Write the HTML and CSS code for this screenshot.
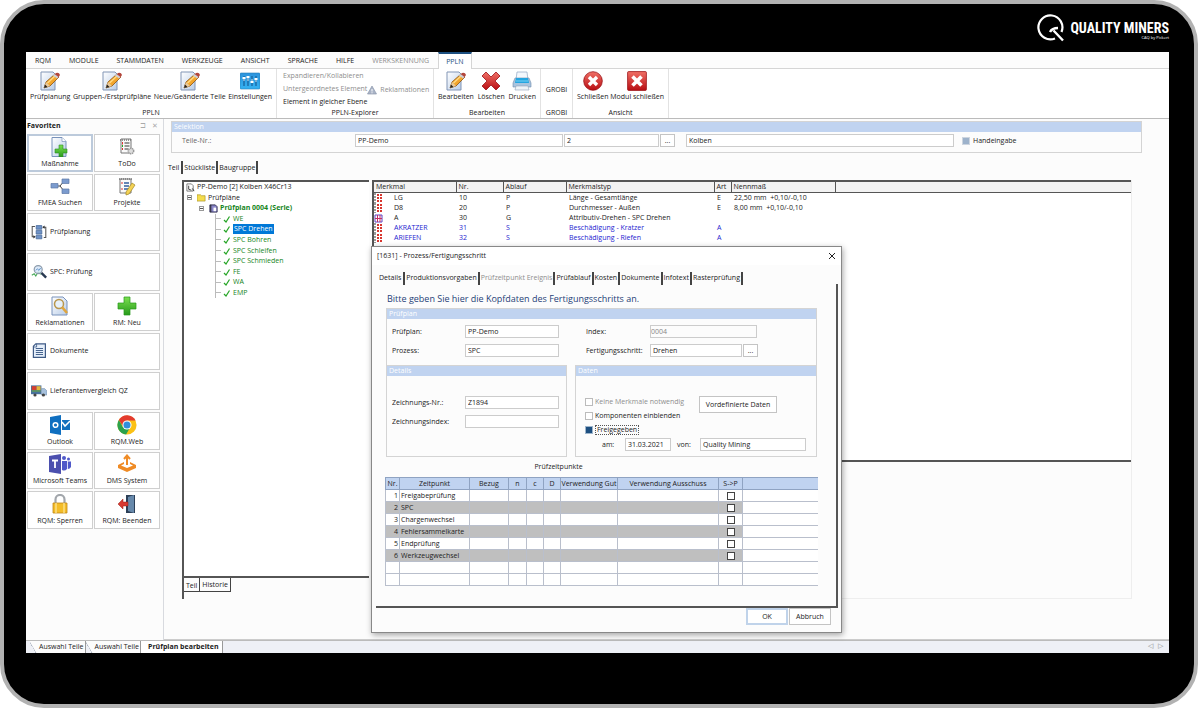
FILE: index.html
```
<!DOCTYPE html>
<html lang="de">
<head>
    <meta charset="UTF-8">
    <meta name="viewport" content="width=device-width, initial-scale=1.0">
    <title>Prüfplan bearbeiten</title>
    <link rel="stylesheet" href="styles.css">
</head>
<body>
    <!-- Icons -->
    <svg class="sprite" aria-hidden="true">
        <defs>
            <linearGradient id="gPage" x1="0" y1="0" x2="1" y2="1"><stop offset="0" stop-color="#fff"/><stop offset="1" stop-color="#b9cde8"/></linearGradient>
            <linearGradient id="gRed" x1="0" y1="0" x2="0" y2="1"><stop offset="0" stop-color="#f07066"/><stop offset="1" stop-color="#b80d12"/></linearGradient>
            <linearGradient id="gBlue" x1="0" y1="0" x2="0" y2="1"><stop offset="0" stop-color="#2c93dc"/><stop offset="1" stop-color="#35b2f2"/></linearGradient>
            <linearGradient id="gGreen" x1="0" y1="0" x2="0" y2="1"><stop offset="0" stop-color="#7be04f"/><stop offset="1" stop-color="#279a1b"/></linearGradient>
        </defs>
        <symbol id="edit" viewBox="0 0 20 20">
            <path d="M1 1h12l2 2v16H1z" fill="url(#gPage)" stroke="#8195b5"/>
            <path d="M4 17l2-6 9-8 4 3-9 9z" fill="#f2a52c" stroke="#8a5312" stroke-width=".8"/>
            <path d="M7.500 12l8-7.500" stroke="#ffd982" stroke-width="1.500"/>
            <path d="M14 4l2-2q3-1 4 2l-2 3z" fill="#b3453b"/>
            <path d="M13 4.500l4 3 1.500-1.500-4-3z" fill="#cfd0d4"/>
            <path d="M4 17l2-6 4 4z" fill="#e8c99c"/><path d="M4 17l1-3.500L7.500 16z" fill="#222"/>
        </symbol>
        <symbol id="settings" viewBox="0 0 20 20">
            <rect x="0" y="2" width="20" height="16" rx="1" fill="url(#gBlue)" stroke="#237db9" stroke-width=".6"/>
            <path d="M4 5v10M8 5v10M12 5v10M16 5v10" stroke="#185f98" stroke-width="1.200"/>
            <path d="M2.500 7h3M6.500 6h3M10.500 11h3M14.500 8h3" stroke="#fff" stroke-width="1.800"/>
            <path d="M4 7v3M8 6v4M12 8v3M16 8v3" stroke="#fff" stroke-width=".8"/>
        </symbol>
        <symbol id="warn" viewBox="0 0 10 10"><path d="M5 1l4.500 8h-9z" fill="#a9b3c6" stroke="#8e99ae" stroke-width=".7"/><path d="M5 4v2.500M5 7.300v1" stroke="#fff"/></symbol>
        <symbol id="delete" viewBox="0 0 20 20"><path d="M1 5l4-4 5 5 5-5 4 4-5 5 5 5-4 4-5-5-5 5-4-4 5-5z" fill="url(#gRed)" stroke="#9c1219" stroke-width=".8"/></symbol>
        <symbol id="print" viewBox="0 0 20 20">
            <path d="M5 1h10l1 8H4z" fill="#f4f8fd" stroke="#8fa6c3" stroke-width=".7"/>
            <path d="M3 7h14l2 5v4H1v-4z" fill="#a9c4de" stroke="#718bab" stroke-width=".6"/>
            <path d="M4 7h12l1 5H3z" fill="#24a5e0"/><path d="M4 10h12" stroke="#79d2f5"/>
            <path d="M4 15h12l1 4H3z" fill="#eef3f8" stroke="#90a3b9" stroke-width=".6"/>
        </symbol>
        <symbol id="close-round" viewBox="0 0 20 20"><circle cx="10" cy="10" r="9.300" fill="url(#gRed)" stroke="#9b1318" stroke-width=".8"/><path d="M6 6l8 8M14 6l-8 8" stroke="#fff" stroke-width="3.400"/></symbol>
        <symbol id="close-square" viewBox="0 0 20 20"><rect x=".6" y=".6" width="18.800" height="18.800" rx="1" fill="url(#gRed)" stroke="#9b1318" stroke-width=".8"/><path d="M5.500 5.500l9 9M14.500 5.500l-9 9" stroke="#fff" stroke-width="3.600"/></symbol>
        <symbol id="add-page" viewBox="0 0 20 20"><path d="M2 .5h10l4 4v15H2z" fill="url(#gPage)" stroke="#7892bb"/><path d="M12 .5v4h4" fill="#fff" stroke="#7892bb" stroke-width=".7"/><path d="M9 8h4v4h4v4h-4v4H9v-4H5v-4h4z" fill="url(#gGreen)" stroke="#2b8c25" stroke-width=".6"/></symbol>
        <symbol id="todo" viewBox="0 0 20 20"><path d="M4 2h10v14H4z" fill="#fafafa" stroke="#777"/><path d="M3 3h12" stroke="#777" stroke-width="1.500" stroke-dasharray="1 1"/><path d="M7.500 6h5M7.500 9h5M7.500 12h4" stroke="#777" stroke-width="1.300"/><path d="M5.500 5v2.500M5.500 11v2" stroke="#d33"/><path d="M5.500 8v2" stroke="#2a2"/><circle cx="14" cy="14" r="2.700" fill="#ddd" stroke="#999" stroke-width="1.500" stroke-dasharray="1.300 .6"/></symbol>
        <symbol id="projects" viewBox="0 0 20 20"><path d="M3 3h11v14H3z" fill="#fafafa" stroke="#777"/><path d="M2 3h13" stroke="#777" stroke-width="1.500" stroke-dasharray="1 1"/><path d="M7 7h5M7 10h5M7 13h5" stroke="#345f9e" stroke-width="1.300"/><path d="M5 6v2M5 12v2" stroke="#d33"/><path d="M9 16l6-9 3 2-6 9-3 1z" fill="#f4d254" stroke="#a18727" stroke-width=".7"/></symbol>
        <symbol id="fmea" viewBox="0 0 20 20"><path d="M7 10h3l4-5M10 10l4 5" fill="none" stroke="#444"/><path d="M1 7.500h7v4.500H1zM12 3h7v4.500h-7zM12 13h7v4.500h-7z" fill="#7b9bce" stroke="#5d79a6" stroke-width=".7"/></symbol>
        <symbol id="plan" viewBox="0 0 20 20"><path d="M5 3H1.500v13H4M15 4h3.500v13H16" fill="none" stroke="#555" stroke-width="1.300"/><path d="M3 14l3 2-3 2zM17 2l-3 2 3 2z" fill="#333"/><path d="M6.500 2h7v4.500h-7zM6.500 8h7v4.500h-7zM6.500 14h7v4.500h-7z" fill="#6f92c7" stroke="#48699b"/></symbol>
        <symbol id="spc" viewBox="0 0 20 20"><path d="M1 14l3-2 2 3 3-5 3 3" fill="none" stroke="#45a856" stroke-width="1.300"/><circle cx="9" cy="7" r="5" fill="#d4e5f7" fill-opacity=".8" stroke="#8c9bab" stroke-width="1.500"/><path d="M6 8l2-2 2 2 2-3" fill="none" stroke="#4580be"/><path d="M13 11l6 6" stroke="#273850" stroke-width="3"/></symbol>
        <symbol id="complaint" viewBox="0 0 20 20"><path d="M2 1h11l4 4v14H2z" fill="url(#gPage)" stroke="#7892bb"/><circle cx="9" cy="8" r="4.500" fill="#e6f1fb" stroke="#b9974e" stroke-width="1.500"/><path d="M12 11l5 6" stroke="#e0a63e" stroke-width="2.600"/></symbol>
        <symbol id="plus" viewBox="0 0 20 20"><path d="M7 1h6v6h6v6h-6v6H7v-6H1V7h6z" fill="url(#gGreen)" stroke="#279a1b" stroke-width=".7"/></symbol>
        <symbol id="docs" viewBox="0 0 20 20"><path d="M6 1h12v17H3V4z" fill="#e6effa" stroke="#3f5b86" stroke-width="1.500"/><path d="M7 1v4H3" fill="none" stroke="#3f5b86"/><path d="M6 7h9M6 9.500h9M6 12h9M6 14.500h9" stroke="#48658f" stroke-width="1.300"/></symbol>
        <symbol id="truck" viewBox="0 0 20 20"><path d="M0 3h13v11H0z" fill="#49729d"/><path d="M1 4h6v5H1z" fill="#d63e2f"/><path d="M7 4h5v5H7z" fill="#e4b53c"/><path d="M1 10h11" stroke="#62a34d" stroke-width="1.600"/><path d="M13 7h4l3 3v5h-7z" fill="#a6c0dc" stroke="#6480a0" stroke-width=".6"/><circle cx="5" cy="15" r="2" fill="#444"/><circle cx="15.500" cy="15" r="2" fill="#444"/></symbol>
        <symbol id="outlook" viewBox="0 0 20 20"><path d="M0 2l11-2v20L0 18z" fill="#0f6fc0"/><circle cx="5.500" cy="10" r="2.300" fill="none" stroke="#fff" stroke-width="1.500"/><path d="M12 5h8v10h-8z" fill="#1270bd"/><path d="M12 7l3 4 5-5" fill="none" stroke="#fff" stroke-width="1.500"/></symbol>
        <symbol id="chrome" viewBox="0 0 22 22"><circle cx="11" cy="11" r="10.500" fill="#fbc116"/><path d="M2 5.500A10.500 10.500 0 0 1 20.500 6H11L7 13z" fill="#e33b2e"/><path d="M2 5.500A10.500 10.500 0 0 0 10 21.500L14.500 13.500H6.500z" fill="#2ba24c"/><circle cx="11" cy="11" r="5" fill="#fff"/><circle cx="11" cy="11" r="3.900" fill="#318fdc"/></symbol>
        <symbol id="teams" viewBox="0 0 22 20"><circle cx="15" cy="4" r="2" fill="#5059c9"/><circle cx="19.500" cy="5" r="1.500" fill="#5059c9"/><path d="M13 7h5v8a4 4 0 0 1-5 1z" fill="#5059c9"/><path d="M18.800 7.500H22V13q-1 2-3.200 2z" fill="#5059c9"/><path d="M0 2l12-2v20L0 18z" fill="#4b4fae"/><path d="M3 6.500h6M6 6.500V14" stroke="#fff" stroke-width="1.800"/></symbol>
        <symbol id="dms" viewBox="0 0 20 20"><path d="M10 11V3M7 5l3-3.500L13 5" fill="none" stroke="#ef8b25" stroke-width="2"/><path d="M7 8l-6 3v3l9 4 9-4v-3l-6-3v2l3 1.500-6 2.500-6-2.500L7 10z" fill="#ef8b25"/></symbol>
        <symbol id="lock" viewBox="0 0 20 20"><path d="M5.500 10V5.500a4.500 4.500 0 0 1 9 0V10" fill="none" stroke="#a2a6ab" stroke-width="2.200"/><path d="M3 9h14v10H3z" fill="#f4bd28" stroke="#bf8618" stroke-width=".8"/><path d="M6 9v10M14 9v10" stroke="#fbe084" stroke-width="1.500"/></symbol>
        <symbol id="exit" viewBox="0 0 20 20"><path d="M9 1h9v18H9z" fill="#2c3f57"/><path d="M11 3l6-2v18l-6-2z" fill="#6789ab"/><path d="M11 8H6V5l-5 5 5 5v-3h5z" fill="#d83931" stroke="#952019" stroke-width=".5"/></symbol>
        <symbol id="check" viewBox="0 0 8 8"><path d="M1 5L3 7l3.500-5.500" fill="none" stroke="#26a526" stroke-width="1.200"/></symbol>
        <symbol id="part" viewBox="0 0 10 10"><path d="M1 1h5l2 2v6H1z" fill="#fff" stroke="#555" stroke-width=".8"/><path d="M3 3v4l3 1M7 6l2 3" stroke="#333" fill="none"/></symbol>
        <symbol id="folder" viewBox="0 0 10 10"><path d="M0 2h4l1 1h4v6H0z" fill="#f4dc4c" stroke="#a68f25" stroke-width=".7"/></symbol>
        <symbol id="book" viewBox="0 0 10 10"><path d="M1 1h6l2 2v6H1z" fill="#8a86c8" stroke="#29284c"/><path d="M5 4h3v4H5z" fill="#fff"/><path d="M2 1v8" stroke="#222"/></symbol>
        <symbol id="variable" viewBox="0 0 9 10"><path d="M1 0v10" stroke="#333" stroke-dasharray="2 1"/><path d="M4 1v8M7 1v8" stroke="#d8362f" stroke-width="2" stroke-dasharray="2 1"/></symbol>
        <symbol id="attribute" viewBox="0 0 9 10"><path d="M1 2h7v7H1z" fill="#fff" stroke="#5e43c1"/><path d="M1 5.500h7M3.500 2v7M6 2v7" stroke="#c22f64"/></symbol>
    </svg>

    <div class="device">
        <header class="brand">
            <svg class="brand-logo" viewBox="0 0 28 28"><path d="M18 24.500A12 12 0 1 1 24.500 18" fill="none" stroke="#fff" stroke-width="2.200"/><path d="M13 18q2-4 8-4M16.500 16.500L26 26.500" fill="none" stroke="#fff" stroke-width="2.400"/></svg>
            <div class="brand-text">
                <strong>QUALITY MINERS</strong>
                <small>CAQ by Pickert</small>
            </div>
        </header>

        <div class="app">
            <nav class="menu">
                <button type="button">RQM</button>
                <button type="button">MODULE</button>
                <button type="button">STAMMDATEN</button>
                <button type="button">WERKZEUGE</button>
                <button type="button">ANSICHT</button>
                <button type="button">SPRACHE</button>
                <button type="button">HILFE</button>
                <button type="button" class="muted">WERKSKENNUNG</button>
                <button type="button" class="active">PPLN</button>
            </nav>

            <div class="ribbon">
                <section class="group group-ppln">
                    <div class="tools">
                        <button type="button"><svg><use href="#edit"/></svg>Prüfplanung</button>
                        <button type="button"><svg><use href="#edit"/></svg>Gruppen-/Erstprüfpläne</button>
                        <button type="button"><svg><use href="#edit"/></svg>Neue/Geänderte Teile</button>
                        <button type="button"><svg><use href="#settings"/></svg>Einstellungen</button>
                    </div>
                    <div class="group-name">PPLN</div>
                </section>
                <section class="group group-explorer">
                    <div class="explorer">
                        <div class="explorer-list">
                            <button type="button" class="muted">Expandieren/Kollabieren</button>
                            <button type="button" class="muted">Untergeordnetes Element</button>
                            <button type="button">Element in gleicher Ebene</button>
                        </div>
                        <button type="button" class="muted complaint"><svg><use href="#warn"/></svg>Reklamationen</button>
                    </div>
                    <div class="group-name">PPLN-Explorer</div>
                </section>
                <section class="group group-edit">
                    <div class="tools">
                        <button type="button"><svg><use href="#edit"/></svg>Bearbeiten</button>
                        <button type="button"><svg><use href="#delete"/></svg>Löschen</button>
                        <button type="button"><svg><use href="#print"/></svg>Drucken</button>
                    </div>
                    <div class="group-name">Bearbeiten</div>
                </section>
                <section class="group group-grobi">
                    <div class="tools"><button type="button">GROBI</button></div>
                    <div class="group-name">GROBI</div>
                </section>
                <section class="group group-view">
                    <div class="tools">
                        <button type="button"><svg><use href="#close-round"/></svg>Schließen</button>
                        <button type="button"><svg><use href="#close-square"/></svg>Modul schließen</button>
                    </div>
                    <div class="group-name">Ansicht</div>
                </section>
            </div>

            <div class="main">
                <aside class="sidebar">
                    <div class="sidebar-head"><strong>Favoriten</strong><span class="pin">⊐</span><span class="pin">✕</span></div>
                    <div class="favorites">
                        <button type="button" class="selected"><svg><use href="#add-page"/></svg>Maßnahme</button>
                        <button type="button"><svg><use href="#todo"/></svg>ToDo</button>
                        <button type="button"><svg><use href="#fmea"/></svg>FMEA Suchen</button>
                        <button type="button"><svg><use href="#projects"/></svg>Projekte</button>
                        <button type="button" class="wide"><svg><use href="#plan"/></svg>Prüfplanung</button>
                        <button type="button" class="wide"><svg><use href="#spc"/></svg>SPC: Prüfung</button>
                        <button type="button"><svg><use href="#complaint"/></svg>Reklamationen</button>
                        <button type="button"><svg><use href="#plus"/></svg>RM: Neu</button>
                        <button type="button" class="wide"><svg><use href="#docs"/></svg>Dokumente</button>
                        <button type="button" class="wide"><svg><use href="#truck"/></svg>Lieferantenvergleich QZ</button>
                        <button type="button"><svg><use href="#outlook"/></svg>Outlook</button>
                        <button type="button"><svg><use href="#chrome"/></svg>RQM.Web</button>
                        <button type="button"><svg><use href="#teams"/></svg>Microsoft Teams</button>
                        <button type="button"><svg><use href="#dms"/></svg>DMS System</button>
                        <button type="button"><svg><use href="#lock"/></svg>RQM: Sperren</button>
                        <button type="button"><svg><use href="#exit"/></svg>RQM: Beenden</button>
                    </div>
                </aside>

                <main class="content">
                    <section class="panel selection">
                        <h2>Selektion</h2>
                        <div class="selection-row">
                            <label for="partNo">Teile-Nr.:</label>
                            <input type="text" id="partNo" class="part-no" value="PP-Demo">
                            <input type="text" class="part-index" aria-label="Index" value="2">
                            <button type="button" class="btn more">...</button>
                            <input type="text" class="part-name" aria-label="Bezeichnung" value="Kolben">
                            <label class="manual"><input type="checkbox" class="gray-check">Handeingabe</label>
                        </div>
                    </section>

                    <div class="tabs">
                        <button type="button" class="active">Teil</button>
                        <button type="button">Stückliste</button>
                        <button type="button">Baugruppe</button>
                    </div>

                    <div class="work">
                        <div class="tree-col">
                            <ul class="tree">
                                <li><svg><use href="#part"/></svg>PP-Demo [2] Kolben X46Cr13</li>
                                <li class="level-1"><i class="toggle"></i><svg><use href="#folder"/></svg>Prüfpläne</li>
                                <li class="level-2"><i class="toggle"></i><svg><use href="#book"/></svg><strong>Prüfplan 0004 (Serie)</strong></li>
                                <li class="leaf"><svg><use href="#check"/></svg><span>WE</span></li>
                                <li class="leaf"><svg><use href="#check"/></svg><span class="current">SPC Drehen</span></li>
                                <li class="leaf"><svg><use href="#check"/></svg><span>SPC Bohren</span></li>
                                <li class="leaf"><svg><use href="#check"/></svg><span>SPC Schleifen</span></li>
                                <li class="leaf"><svg><use href="#check"/></svg><span>SPC Schmieden</span></li>
                                <li class="leaf"><svg><use href="#check"/></svg><span>FE</span></li>
                                <li class="leaf"><svg><use href="#check"/></svg><span>WA</span></li>
                                <li class="leaf"><svg><use href="#check"/></svg><span>EMP</span></li>
                            </ul>
                            <div class="tree-tabs">
                                <button type="button" class="active">Teil</button>
                                <button type="button">Historie</button>
                            </div>
                        </div>

                        <div class="list-col">
                            <div class="list">
                                <table class="features">
                                    <thead>
                                        <tr><th class="c-name">Merkmal</th><th class="c-nr">Nr.</th><th class="c-flow">Ablauf</th><th class="c-type">Merkmalstyp</th><th class="c-art">Art</th><th class="c-nominal">Nennmaß</th><th></th></tr>
                                    </thead>
                                    <tbody>
                                        <tr><td><svg><use href="#variable"/></svg>LG</td><td>10</td><td>P</td><td>Länge - Gesamtlänge</td><td>E</td><td>22,50 mm &nbsp;+0,10/-0,10</td><td></td></tr>
                                        <tr><td><svg><use href="#variable"/></svg>D8</td><td>20</td><td>P</td><td>Durchmesser - Außen</td><td>E</td><td>8,00 mm &nbsp;+0,10/-0,10</td><td></td></tr>
                                        <tr><td><svg><use href="#attribute"/></svg>A</td><td>30</td><td>G</td><td>Attributiv-Drehen - SPC Drehen</td><td></td><td></td><td></td></tr>
                                        <tr class="damage"><td><svg><use href="#variable"/></svg>AKRATZER</td><td>31</td><td>S</td><td>Beschädigung - Kratzer</td><td>A</td><td></td><td></td></tr>
                                        <tr class="damage"><td><svg><use href="#variable"/></svg>ARIEFEN</td><td>32</td><td>S</td><td>Beschädigung - Riefen</td><td>A</td><td></td><td></td></tr>
                                    </tbody>
                                </table>
                            </div>
                        </div>
                    </div>
                </main>

                <!-- Dialog -->
                <div class="dialog" role="dialog" aria-labelledby="dialogTitle">
                    <div class="dialog-head">
                        <span id="dialogTitle">[1631] - Prozess/Fertigungsschritt</span>
                        <button type="button" class="dialog-close" aria-label="Schließen"><svg viewBox="0 0 8 8"><path d="M1 1l6 6M7 1L1 7" stroke="#222" stroke-width="1"/></svg></button>
                    </div>
                    <div class="tabs">
                        <button type="button" class="active">Details</button>
                        <button type="button">Produktionsvorgaben</button>
                        <button type="button" class="muted">Prüfzeitpunkt Ereignis</button>
                        <button type="button">Prüfablauf</button>
                        <button type="button">Kosten</button>
                        <button type="button">Dokumente</button>
                        <button type="button">Infotext</button>
                        <button type="button">Rasterprüfung</button>
                    </div>
                    <div class="dialog-body">
                        <h1>Bitte geben Sie hier die Kopfdaten des Fertigungsschritts an.</h1>
                        <section class="panel plan">
                            <h2>Prüfplan</h2>
                            <div class="plan-fields">
                                <label for="planNo">Prüfplan:</label>
                                <input type="text" id="planNo" value="PP-Demo">
                                <label for="idx">Index:</label>
                                <div class="with-button"><input type="text" id="idx" class="idx" value="0004" disabled></div>
                                <label for="process">Prozess:</label>
                                <input type="text" id="process" value="SPC">
                                <label for="step">Fertigungsschritt:</label>
                                <div class="with-button"><input type="text" id="step" class="step" value="Drehen"><button type="button" class="btn more">...</button></div>
                            </div>
                        </section>
                        <div class="columns">
                            <section class="panel details">
                                <h2>Details</h2>
                                <div class="detail-fields">
                                    <label for="drawing">Zeichnungs-Nr.:</label>
                                    <input type="text" id="drawing" value="Z1894">
                                    <label for="drawingIndex">Zeichnungsindex:</label>
                                    <input type="text" id="drawingIndex">
                                </div>
                            </section>
                            <section class="panel data">
                                <h2>Daten</h2>
                                <div class="data-fields">
                                    <div class="checks">
                                        <div class="check-list">
                                            <label class="muted"><input type="checkbox" disabled>Keine Merkmale notwendig</label>
                                            <label><input type="checkbox">Komponenten einblenden</label>
                                            <label><input type="checkbox" checked><span class="focused">Freigegeben</span></label>
                                        </div>
                                        <button type="button" class="btn preset">Vordefinierte Daten</button>
                                    </div>
                                    <div class="release">
                                        <label for="date">am:</label>
                                        <input type="text" id="date" class="date" value="31.03.2021">
                                        <label for="user">von:</label>
                                        <input type="text" id="user" class="user" value="Quality Mining">
                                    </div>
                                </div>
                            </section>
                        </div>
                        <table class="times">
                            <caption>Prüfzeitpunkte</caption>
                            <thead>
                                <tr><th class="t-nr">Nr.</th><th class="t-name">Zeitpunkt</th><th class="t-ref">Bezug</th><th class="t-n">n</th><th class="t-c">c</th><th class="t-c">D</th><th class="t-good">Verwendung Gut</th><th class="t-bad">Verwendung Ausschuss</th><th class="t-sp">S-&gt;P</th><th></th></tr>
                            </thead>
                            <tbody>
                                <tr><td>1</td><td>Freigabeprüfung</td><td></td><td></td><td></td><td></td><td></td><td></td><td><input type="checkbox" aria-label="S-&gt;P 1"></td><td></td></tr>
                                <tr class="alt"><td>2</td><td>SPC</td><td></td><td></td><td></td><td></td><td></td><td></td><td><input type="checkbox" aria-label="S-&gt;P 2"></td><td></td></tr>
                                <tr><td>3</td><td>Chargenwechsel</td><td></td><td></td><td></td><td></td><td></td><td></td><td><input type="checkbox" aria-label="S-&gt;P 3"></td><td></td></tr>
                                <tr class="alt"><td>4</td><td>Fehlersammelkarte</td><td></td><td></td><td></td><td></td><td></td><td></td><td><input type="checkbox" aria-label="S-&gt;P 4"></td><td></td></tr>
                                <tr><td>5</td><td>Endprüfung</td><td></td><td></td><td></td><td></td><td></td><td></td><td><input type="checkbox" aria-label="S-&gt;P 5"></td><td></td></tr>
                                <tr class="alt"><td>6</td><td>Werkzeugwechsel</td><td></td><td></td><td></td><td></td><td></td><td></td><td><input type="checkbox" aria-label="S-&gt;P 6"></td><td></td></tr>
                                <tr><td></td><td></td><td></td><td></td><td></td><td></td><td></td><td></td><td></td><td></td></tr>
                                <tr><td></td><td></td><td></td><td></td><td></td><td></td><td></td><td></td><td></td><td></td></tr>
                            </tbody>
                        </table>
                    </div>
                    <div class="dialog-foot">
                        <button type="button" class="btn ok">OK</button>
                        <button type="button" class="btn">Abbruch</button>
                    </div>
                </div>
            </div>

            <footer class="windows">
                <button type="button">Auswahl Teile</button>
                <button type="button">Auswahl Teile</button>
                <button type="button" class="active">Prüfplan bearbeiten</button>
                <div class="scroll"><span>◁</span><span>▷</span></div>
            </footer>
        </div>
    </div>
</body>
</html>
```
FILE: styles.css
```
* {
    box-sizing: border-box;
}
body {
    margin: 0;
    padding: 0 2px 2px 0;
    height: 100vh;
    background-color: white;
    color: #222;
    font-family: "Open Sans", "Noto Sans", sans-serif;
    font-size: 7px;
    line-height: 10px;
}
button, input {
    font: inherit;
    color: inherit;
    margin: 0;
}
button {
    border: none;
    background: none;
    padding: 0;
    white-space: nowrap;
    cursor: pointer;
}
label {
    white-space: nowrap;
}
input[type="text"] {
    height: 13px;
    min-width: 0;
    padding: 0 2px;
    border: 1px solid #ccc;
    background-color: white;
}
input[type="text"]:disabled {
    padding: 0;
    background-color: #fcfcfc;
    color: #888;
}
input[type="checkbox"] {
    appearance: none;
    flex: none;
    width: 8px;
    height: 8px;
    border: 1px solid #bbb;
    background-color: white;
}
input[type="checkbox"]:checked {
    border: 1px solid #9fb6cc;
    background-color: #1d4f80;
}
.sprite {
    position: absolute;
    width: 0;
    height: 0;
}
.muted {
    color: #8e8e8e;
}

/* Frame */
.device {
    display: flex;
    flex-direction: column;
    height: 100%;
    min-height: 700px;
    padding: 0 25px 51px 22px;
    border: 4px solid #b2b2b2;
    border-radius: 44px;
    background-color: black;
}
.brand {
    display: flex;
    justify-content: flex-end;
    align-items: center;
    height: 48px;
    gap: 5px;
    color: white;
}
.brand-logo {
    width: 28px;
    height: 28px;
}
.brand-text {
    display: flex;
    flex-direction: column;
    align-items: flex-end;
    padding-top: 6px;
}
.brand-text strong {
    font-family: "Liberation Sans Narrow", "Roboto Condensed", Roboto, sans-serif;
    font-size: 14px;
    line-height: 14px;
}
.brand-text small {
    font-size: 4px;
    line-height: 6px;
}
.app {
    flex: 1;
    display: flex;
    flex-direction: column;
    min-height: 0;
    background-color: #fcfcfc;
}

/* Menu and ribbon */
.menu {
    display: flex;
    height: 17px;
    border-bottom: 1px solid #d5d5d5;
}
.menu button {
    padding: 2px 9px 0;
}
.menu .active {
    height: 17px;
    padding: 0 7px;
    border: 1px solid #d5d5d5;
    border-top: 2px solid #1c4f80;
    border-bottom: none;
    background-color: white;
    color: #1c4f80;
}
.ribbon {
    display: flex;
    height: 50px;
    border-bottom: 1px solid #bbb;
    background-color: white;
}
.group {
    display: flex;
    flex-direction: column;
    border-right: 1px solid #e2e2e2;
}
.group-ppln { width: 251px; }
.group-explorer { width: 157px; }
.group-edit { width: 107px; }
.group-grobi { width: 32px; }
.group-view { width: 96px; }
.tools {
    flex: 1;
    display: flex;
    justify-content: space-between;
    padding: 2px 4px 0;
}
.tools button {
    display: flex;
    flex-direction: column;
    align-items: center;
    gap: 1px;
}
.tools svg {
    width: 20px;
    height: 20px;
}
.group-grobi .tools {
    justify-content: center;
    align-items: center;
}
.group-name {
    text-align: center;
}
.explorer {
    flex: 1;
    display: flex;
    justify-content: space-between;
    padding: 2px 4px 0 6px;
}
.explorer-list {
    display: flex;
    flex-direction: column;
    align-items: flex-start;
    gap: 3px;
}
.complaint {
    display: flex;
    align-items: center;
    gap: 3px;
}
.complaint svg {
    width: 10px;
    height: 10px;
}

/* Sidebar */
.main {
    position: relative;
    flex: 1;
    display: flex;
    min-height: 0;
}
.sidebar {
    width: 138px;
    padding: 2px 3px 0 1px;
    border-right: 1px solid #d8dadf;
}
.sidebar-head {
    display: flex;
    gap: 6px;
    padding-right: 2px;
    margin-bottom: 3px;
}
.sidebar-head strong {
    flex: 1;
}
.pin {
    color: #aaa;
}
.favorites {
    display: grid;
    grid-template-columns: 1fr 1fr;
    grid-template-rows: repeat(10, 1fr);
    gap: 2px 1px;
    height: 395px;
}
.favorites button {
    display: flex;
    flex-direction: column;
    align-items: center;
    justify-content: flex-end;
    gap: 2px;
    padding-bottom: 2px;
    border: 1px solid #cfcfcf;
    background-color: white;
}
.favorites .selected {
    padding-bottom: 1px;
    border: 2px solid #bccadb;
}
.favorites .wide {
    grid-column: span 2;
    flex-direction: row;
    justify-content: flex-start;
    gap: 3px;
    padding: 0 3px;
}
.favorites svg {
    width: 22px;
    height: 20px;
}
.favorites .wide svg {
    width: 16px;
    height: 18px;
}

/* Content */
.content {
    flex: 1;
    display: flex;
    flex-direction: column;
    min-width: 0;
    padding: 2px 27px 40px 7px;
    border-bottom: 1px solid #ccc;
}
.panel {
    border: 1px solid #d4d4d4;
}
.panel h2 {
    height: 10px;
    margin: 0;
    padding: 0 2px;
    background-color: #c0d3f0;
    color: white;
    font-size: 7px;
    font-weight: normal;
    line-height: 10px;
}
.selection-row {
    display: flex;
    align-items: center;
    padding: 2px 0 5px 10px;
}
.selection-row > label:first-child {
    width: 173px;
    color: #666;
}
.part-no {
    width: 208px;
    margin-right: 1px;
}
.part-index {
    width: 95px;
    margin-right: 1px;
}
.part-name {
    width: 268px;
    margin: 0 8px 0 11px;
}
.btn {
    border: 1px solid #c4c4c4;
    background-color: white;
}
.more {
    width: 15px;
    height: 13px;
}
.manual {
    display: flex;
    align-items: center;
    gap: 3px;
}
input.gray-check {
    border: 1px solid #cdd5df;
    background-color: #9db2cb;
}
.tabs {
    display: flex;
    align-items: center;
}
.tabs button {
    height: 13px;
    padding: 0 1px;
    border-right: 2px solid #444;
}
.tabs .active {
    padding-right: 2px;
}
.content > .tabs {
    margin: 8px 0 6px -4px;
}
.work {
    flex: 1;
    display: flex;
    gap: 3px;
    min-height: 0;
    padding: 0 10px 0 11px;
}
.tree-col {
    display: flex;
    flex-direction: column;
    width: 187px;
    border-left: 2px solid #555;
}
.tree {
    flex: 1;
    display: grid;
    grid-template-rows: repeat(11, 1fr);
    margin: 0;
    padding: 0 2px 278px;
    list-style: none;
    background-color: white;
    border-top: 2px solid #555;
    border-bottom: 2px solid #555;
}
.tree li {
    display: flex;
    align-items: center;
    gap: 2px;
    white-space: nowrap;
}
.tree svg {
    width: 9px;
    height: 9px;
}
.tree .level-1 {
    padding-left: 1px;
}
.tree .level-2 {
    padding-left: 13px;
    color: #16851c;
}
.toggle {
    width: 5px;
    height: 5px;
    margin-right: 3px;
    border: 1px solid #999;
    background: linear-gradient(#555, #555) center / 3px 1px no-repeat;
}
.tree .leaf {
    margin-left: 29px;
    border-left: 1px solid #bbb;
    color: #16851c;
}
.tree .leaf::before {
    content: "";
    width: 5px;
    border-top: 1px solid #bbb;
}
.tree .leaf svg {
    width: 8px;
    height: 8px;
}
.tree .current {
    padding: 0 1px;
    background-color: #0078d7;
    color: white;
}
.tree-tabs {
    display: flex;
    align-items: flex-start;
    height: 21px;
}
.tree-tabs button {
    height: 14px;
    padding: 0 2px;
    border: 1px solid #444;
    border-top: none;
}
.tree-tabs .active {
    padding-top: 2px;
    border-left: none;
    border-right: none;
}
.list-col {
    flex: 1;
    min-width: 0;
    padding-bottom: 136px;
    border-right: 1px solid #eee;
    border-bottom: 1px solid #eee;
}
.list {
    height: 100%;
    border-top: 2px solid #555;
    border-left: 2px solid #555;
    border-bottom: 2px solid #555;
    background-color: white;
}
.features {
    width: 100%;
    border-collapse: collapse;
    table-layout: fixed;
    white-space: nowrap;
}
.features th {
    height: 10px;
    padding: 0 2px;
    border-right: 1px solid #555;
    border-bottom: 1px solid #555;
    background-color: #f2f2f2;
    font-weight: normal;
    text-align: left;
}
.features th:last-child {
    border-right: none;
}
.features td {
    height: 10px;
    padding: 0 3px;
}
.features td:first-child {
    padding-left: 0;
}
.features td svg {
    width: 9px;
    height: 10px;
    margin-right: 11px;
    vertical-align: top;
}
.c-name { width: 82px; }
.c-nr { width: 47px; }
.c-flow { width: 63px; }
.c-type { width: 148px; }
.c-art { width: 17px; }
.c-nominal { width: 104px; }
.damage {
    color: #2424cf;
}

/* Dialog */
.dialog {
    position: absolute;
    top: 127px;
    left: 345px;
    width: 471px;
    background-color: #fcfcfc;
    border: 1px solid #888;
    box-shadow: 1px 2px 6px rgba(0, 0, 0, 0.35);
}
.dialog-head {
    display: flex;
    justify-content: space-between;
    align-items: center;
    height: 18px;
    padding: 0 5px;
    background-color: white;
}
.dialog-close svg {
    display: block;
    width: 8px;
    height: 8px;
}
.dialog .tabs {
    height: 19px;
    padding: 7px 0 0 6px;
}
.dialog-body {
    margin: 0 3px 0 4px;
    padding: 9px 19px 20px 10px;
    border-right: 2px solid #555;
    border-bottom: 2px solid #555;
}
.dialog h1 {
    margin: 0 0 3px 1px;
    color: #1f3f77;
    font-size: 9px;
    font-weight: normal;
    line-height: 12px;
}
.plan {
    border-bottom: none;
}
.plan-fields {
    display: grid;
    grid-template-columns: 73px 121px 64px 108px;
    row-gap: 6px;
    align-items: center;
    padding: 6px 0 8px 5px;
}
.plan-fields > input {
    width: 94px;
}
.with-button {
    display: flex;
    gap: 1px;
}
.idx {
    width: 107px;
}
.step {
    width: 92px;
}
.columns {
    display: flex;
    gap: 8px;
}
.details {
    width: 183px;
}
.data {
    flex: 1;
}
.detail-fields {
    display: grid;
    grid-template-columns: 73px 94px;
    row-gap: 6px;
    align-items: center;
    padding: 20px 0 28px 5px;
}
.data-fields {
    padding: 20px 10px 4px 9px;
}
.checks {
    display: flex;
    align-items: flex-start;
}
.check-list {
    width: 114px;
}
.checks label {
    display: flex;
    align-items: center;
    gap: 2px;
    height: 12px;
    margin-bottom: 2px;
}
.focused {
    padding: 0 1px;
    border: 1px dotted #555;
    line-height: 8px;
}
.preset {
    width: 78px;
    height: 17px;
}
.release {
    display: flex;
    align-items: center;
    padding-left: 17px;
}
.release label {
    width: 23px;
}
.date {
    width: 46px;
    margin-right: 6px;
}
.user {
    width: 106px;
}
.times {
    width: 433px;
    margin-left: -1px;
    border-collapse: collapse;
    table-layout: fixed;
    background-color: white;
    border-left: 1px solid #555;
    white-space: nowrap;
}
.times caption {
    padding: 5px 86px 5px 0;
}
.times th {
    height: 12px;
    padding: 0;
    border: 1px solid #8fa3c2;
    background-color: #c0d3f0;
    font-weight: normal;
}
.times td {
    height: 12px;
    padding: 0 1px;
    border: 1px solid #b9bfcc;
}
.times td:first-child {
    text-align: right;
}
.times th:last-child, .times td:last-child {
    border-right: none;
}
.times .alt td:not(:last-child) {
    background-color: #bfbfbf;
}
.times input[type="checkbox"] {
    display: block;
    margin: 0 auto;
    border: 1px solid #444;
}
.t-nr { width: 14px; }
.t-name { width: 70px; }
.t-ref { width: 39px; }
.t-n { width: 18px; }
.t-c { width: 17px; }
.t-good { width: 57px; }
.t-bad { width: 101px; }
.t-sp { width: 24px; }
.dialog-foot {
    display: flex;
    justify-content: flex-end;
    gap: 1px;
    padding: 0 10px 7px;
}
.dialog-foot .btn {
    width: 42px;
    height: 17px;
}
.dialog-foot .ok {
    border: 2px solid #c0d3ea;
}

/* Window tabs */
.windows {
    display: flex;
    height: 13px;
    padding-left: 4px;
    border-top: 1px solid #bbb;
    background-color: #eef0f6;
}
.windows button {
    padding: 0 1px 0 9px;
    border-right: 1px solid #999;
    background: linear-gradient(60deg, #eef0f6 5px, #aab2c0 5px, #fcfcfc 6px);
}
.windows .active {
    padding: 0 3px 0 7px;
    background: white;
    font-weight: bold;
}
.scroll {
    display: flex;
    gap: 5px;
    margin-left: auto;
    padding-right: 6px;
    color: #888;
}
```
